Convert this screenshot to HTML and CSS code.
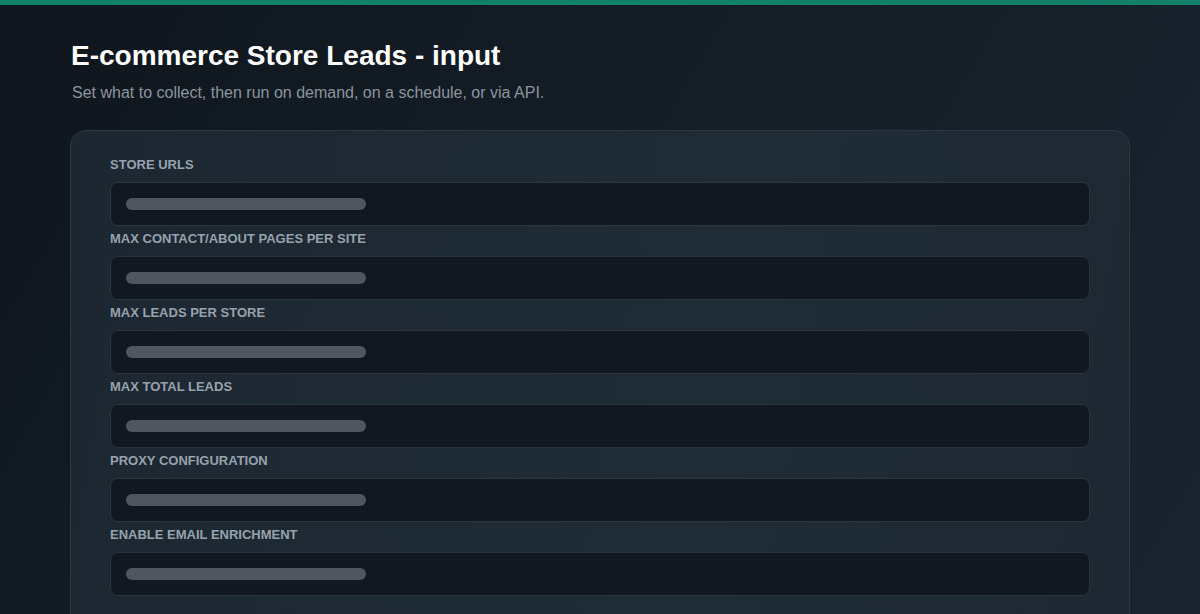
FILE: index.html
```html
<!DOCTYPE html>
<html lang="en">
<head>
    <meta charset="UTF-8">
    <title>E-commerce Store Leads - input</title>
    <link rel="stylesheet" href="styles.css">
</head>
<body>
    <div class="topbar"></div>
    <div class="page">
        <h1 class="title">E-commerce Store Leads - input</h1>
        <p class="subtitle">Set what to collect, then run on demand, on a schedule, or via API.</p>

        <div class="card">
            <div class="field">
                <div class="label">Store URLs</div>
                <div class="input"><div class="placeholder"></div></div>
            </div>
            <div class="field">
                <div class="label">Max contact/about pages per site</div>
                <div class="input"><div class="placeholder"></div></div>
            </div>
            <div class="field">
                <div class="label">Max leads per store</div>
                <div class="input"><div class="placeholder"></div></div>
            </div>
            <div class="field">
                <div class="label">Max total leads</div>
                <div class="input"><div class="placeholder"></div></div>
            </div>
            <div class="field">
                <div class="label">Proxy configuration</div>
                <div class="input"><div class="placeholder"></div></div>
            </div>
            <div class="field">
                <div class="label">Enable email enrichment</div>
                <div class="input"><div class="placeholder"></div></div>
            </div>
        </div>
    </div>
</body>
</html>
```

FILE: styles.css
```css
html, body {
    margin: 0;
    height: 100%;
}

body {
    font-family: "Liberation Sans", Arial, sans-serif;
    background: linear-gradient(120deg, #0f161d 0%, #141d26 45%, #19242e 100%);
    color: #ffffff;
    overflow: hidden;
}

.topbar {
    height: 5px;
    background: #118069;
}

.page {
    padding: 34px 70px 0 70px;
}

.title {
    margin: 0 0 0 1px;
    font-size: 28px;
    font-weight: bold;
    line-height: 34px;
    color: #ffffff;
}

.subtitle {
    margin: 10px 0 0 2px;
    font-size: 16px;
    line-height: 20px;
    color: #8b959f;
}

.card {
    margin-top: 27px;
    padding: 25px 39px 40px 39px;
    border: 1px solid #2b3742;
    border-radius: 16px;
    background: linear-gradient(100deg, #1c2731 0%, #1f2b35 60%, #1d2832 100%);
    display: flex;
    flex-direction: column;
    gap: 4px;
}

.field {
    display: flex;
    flex-direction: column;
    gap: 8px;
}

.label {
    font-size: 13px;
    font-weight: bold;
    line-height: 18px;
    text-transform: uppercase;
    color: #97a2ad;
}

.input {
    height: 42px;
    border: 1px solid #29343f;
    border-radius: 8px;
    background: #111820;
    display: flex;
    align-items: center;
    padding-left: 15px;
}

.placeholder {
    width: 240px;
    height: 12px;
    border-radius: 6px;
    background: #50565d;
}
```
